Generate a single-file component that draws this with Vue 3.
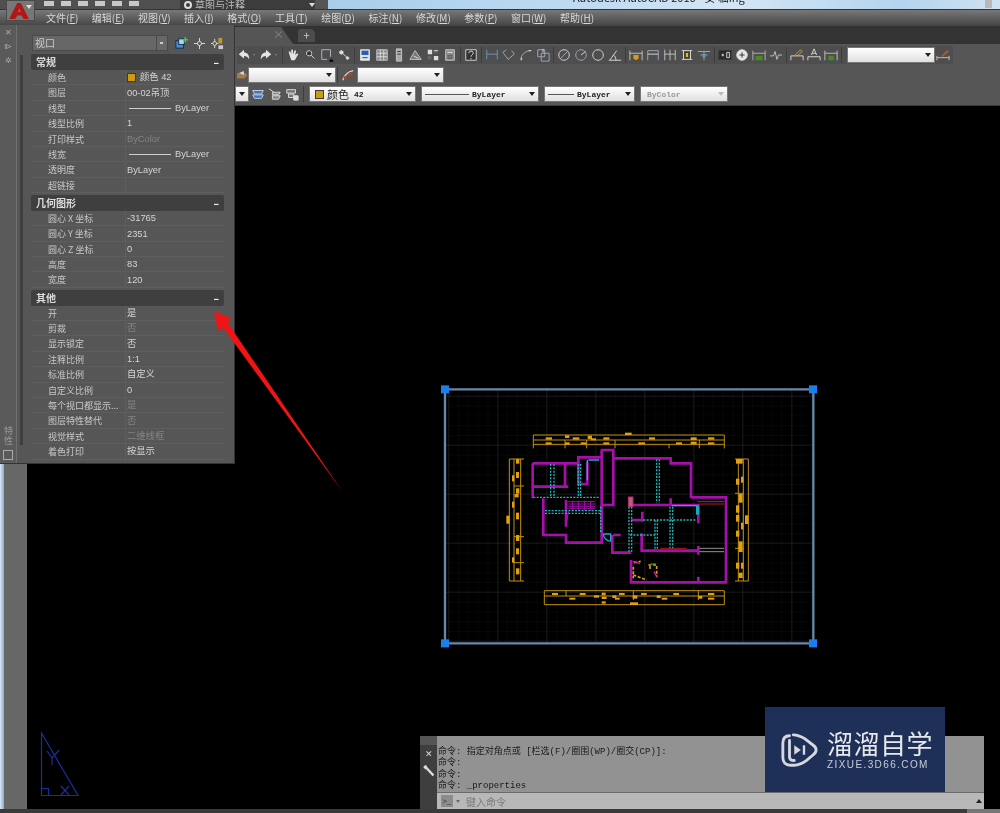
<template>
  <div class="cad">
    <header class="titlebar">
      <div class="qat">
        <span class="qat-btn" v-for="n in 6" :key="n"></span>
      </div>
      <div class="workspace">
        <svg class="gear" viewBox="0 0 10 10"><circle cx="5" cy="5" r="3" fill="none" stroke="#ddd" stroke-width="2" /></svg>
        <span>草图与注释</span>
        <i class="drop light"></i>
      </div>
      <span class="ws-more"></span>
      <div class="sky">
        <span class="app-title">Autodesk AutoCAD 2016 - 安 临ing</span>
        <span class="win-btn"></span>
      </div>
    </header>

    <div class="logo-btn">
      <svg viewBox="0 0 24 20" width="22" height="18">
        <path d="M1 19 L10 1 H14 L23 19 H17 L15 15 H10 L8 19 Z M11 11 H14 L12.500 7 Z" fill="#b01818" fill-rule="evenodd" />
      </svg>
      <i class="drop light"></i>
    </div>

    <nav class="menubar">
      <span v-for="m in menus" :key="m[0]" class="menu">{{ m[0] }}(<u>{{ m[1] }}</u>)</span>
    </nav>

    <div class="tabstrip">
      <div class="tab"><span class="tab-x">×</span></div>
      <div class="tab-add">+</div>
    </div>

    <section class="toolbars">
      <div class="tbar">
        <div class="tgroup wide">
          <button v-for="ic in undoIcons" :key="ic.id" class="tool"><svg viewBox="0 0 16 16"><path v-for="(p, i) in ic.d" :key="i" :d="p[0]" :stroke="p[1]" :fill="p[2] || 'none'" /></svg><i class="drop mini"></i></button>
        </div>
        <template v-for="(group, g) in toolGroups" :key="g">
          <span class="sep"></span>
          <div class="tgroup">
            <button v-for="ic in group" :key="ic.id" class="tool"><svg viewBox="0 0 16 16"><path v-for="(p, i) in ic.d" :key="i" :d="p[0]" :stroke="p[1]" :fill="p[2] || 'none'" /></svg></button>
          </div>
        </template>
        <span class="sep"></span>
        <div class="combo dim-style"><i class="drop"></i></div>
        <button class="tool"><svg viewBox="0 0 16 16"><path d="M1 14V9M15 14V9M1 11H15" stroke="#d8c8a8" fill="none" /><path d="M6 9L13 2L15 4L8 10Z" fill="#a05a30" /></svg></button>
      </div>

      <div class="tbar second">
        <button class="tool small"><svg viewBox="0 0 16 16"><path d="M0 5H12L15 8L11 13H0Z" fill="#a07a50" /><path d="M3 5L10 2V8Z" fill="#e0d8c8" /></svg></button>
        <div class="combo layer-a"><i class="drop"></i></div>
        <span class="sep"></span>
        <button class="tool"><svg viewBox="0 0 16 16"><path d="M2 14C4 8 8 4 14 3" stroke="#d8d8d8" fill="none" stroke-width="1.500" /><circle cx="11" cy="7" r="2.500" fill="#a04828" /><circle cx="5" cy="11" r="2" fill="#a04828" /></svg></button>
        <div class="combo layer-b"><i class="drop"></i></div>
      </div>

      <div class="tbar third">
        <div class="combo stub"><i class="drop"></i></div>
        <div class="tgroup">
          <button v-for="ic in layerIcons" :key="ic.id" class="tool"><svg viewBox="0 0 16 16"><path v-for="(p, i) in ic.d" :key="i" :d="p[0]" :stroke="p[1]" :fill="p[2] || 'none'" /></svg></button>
        </div>
        <span class="sep wide-sep"></span>
        <div class="combo color-c"><b class="swatch"></b><span class="cjk">颜色</span><span class="mono">42</span><i class="drop"></i></div>
        <div class="combo line-c"><span class="rule"></span><span class="mono">ByLayer</span><i class="drop"></i></div>
        <div class="combo weight-c"><span class="rule short"></span><span class="mono">ByLayer</span><i class="drop"></i></div>
        <div class="combo off-c"><span class="mono">ByColor</span><i class="drop faint"></i></div>
      </div>
    </section>

    <main class="workarea">
      <div class="edge"></div>
      <div class="left-gutter"></div>
      <div class="canvas"></div>
    </main>

    <footer class="statusbar"><span class="status-end"></span></footer>

    <!-- overlays -->
    <svg class="plan" viewBox="0 0 1200 810" width="400" height="270">
      <defs>
        <pattern id="minor" width="29.4" height="29.4" patternUnits="userSpaceOnUse" x="-1" y="21">
          <path d="M29.400 0V29.400M0 29.400H29.400" stroke="#101010" stroke-width="2" fill="none" />
        </pattern>
        <pattern id="major" width="147" height="147" patternUnits="userSpaceOnUse" x="58" y="50">
          <path d="M147 0V147M0 147H147" stroke="#2a2a2a" stroke-width="3" fill="none" />
        </pattern>
      </defs>
      <rect x="45" y="28" width="1105" height="762" fill="url(#minor)" />
      <rect x="45" y="28" width="1105" height="762" fill="url(#major)" />

      <g stroke="#c0900c" stroke-width="3" fill="none">
        <path v-for="(d, i) in dimLines" :key="i" :d="d" />
      </g>
      <g fill="#e0a010">
        <rect v-for="(r, i) in dimLabels" :key="i" :x="r[0]" :y="r[1]" :width="r[2]" :height="r[3]" />
      </g>

      <g stroke="#a010a8" stroke-width="3" fill="none">
        <path d="M415 365H495M415 372H495M415 379H495M415 386H495M428 362V392M446 362V392M464 362V392M482 362V392" />
      </g>
      <g stroke="#a610aa" stroke-width="8" fill="none">
        <path v-for="(d, i) in walls" :key="i" :d="d" />
      </g>
      <g stroke="#a610aa" stroke-width="3" fill="none">
        <path v-for="(d, i) in thinWalls" :key="i" :d="d" />
      </g>
      <rect x="595" y="351" width="14" height="29" fill="#a86a6a" stroke="#c02080" stroke-width="3" />
      <g stroke="#22b4b4" stroke-width="4" stroke-dasharray="6 4" fill="none">
        <path v-for="(d, i) in hidden" :key="i" :d="d" />
      </g>
      <g stroke="#22a8d0" stroke-width="4" fill="none">
        <path d="M475 240H508M472 240V300M725 377H800M520 462H542V484M520 462A23 23 0 0 0 542 484" />
      </g>
      <rect x="798" y="376" width="9" height="28" fill="#10b0b8" />
      <path d="M690 505H770M808 372H882" stroke="#b01818" stroke-width="3" fill="none" />
      <path d="M808 505H882M808 515H882" stroke="#909090" stroke-width="3" fill="none" />
      <path d="M612 548L632 544M610 560V595M610 585L650 600M655 555H680V590M660 558V572" stroke="#d8a010" stroke-width="5" stroke-dasharray="9 5" fill="none" />
      <path d="M608 545L630 550M672 575L682 592" stroke="#e02090" stroke-width="4" fill="none" />
      <path d="M662 552H678" stroke="#20c050" stroke-width="3" fill="none" />

      <path d="M45 28H1150V790H45Z" fill="none" stroke="#6688aa" stroke-width="7" />
      <g fill="#1880ec">
        <rect x="33" y="16" width="24" height="24" />
        <rect x="1137" y="16" width="24" height="24" />
        <rect x="33" y="778" width="24" height="24" />
        <rect x="1137" y="778" width="24" height="24" />
      </g>
    </svg>

    <svg class="ucs" viewBox="0 0 40 66" width="40" height="66">
      <path d="M1.500 2V64.500H38L1.500 2ZM1.500 57.500H8.500V64.500M7 20L12 27V34M12 27L19 19M21 55L29 64M21 64L29 55" fill="none" stroke="#1a2e9a" stroke-width="1.200" />
    </svg>

    <aside class="palette">
      <div class="pal-title">
        <span class="pal-btn">✕</span>
        <span class="pal-btn arrows">⧐</span>
        <span class="pal-btn gear-small">✲</span>
        <span class="pal-name">特性</span>
        <span class="pal-foot"></span>
      </div>
      <div class="pal-main">
        <div class="pal-head">
          <div class="pal-select"><span>视口</span><em><i></i></em></div>
          <svg class="pal-ic" viewBox="0 0 14 14"><rect x="1" y="4" width="8" height="8" fill="#4a90c8" stroke="#102a50" /><rect x="4" y="2" width="6" height="6" fill="#bcd4ea" stroke="#102a50" /><path d="M11 0V6M8 3H14" stroke="#38d040" stroke-width="1.600" /></svg>
          <svg class="pal-ic" viewBox="0 0 14 14"><circle cx="7" cy="7" r="2.200" fill="none" stroke="#ddd" /><path d="M7 1V5M7 9V13M1 7H5M9 7H13" stroke="#ddd" /></svg>
          <svg class="pal-ic" viewBox="0 0 14 14"><circle cx="4" cy="7" r="2" fill="none" stroke="#ddd" /><path d="M4 2V5M4 9V12M0 7H2M6 7H8" stroke="#ddd" /><rect x="8" y="1" width="4" height="6" fill="#c8962a" /><rect x="8" y="9" width="5" height="4" fill="#ccc" /></svg>
        </div>
        <div class="pal-scroll">
          <section v-for="sec in sections" :key="sec.name" class="pal-sec">
            <h3 class="sec-head"><span>{{ sec.name }}</span><b>–</b></h3>
            <div v-for="row in sec.rows" :key="row.k" class="prop">
              <span class="prop-k">{{ row.k }}</span>
              <span class="prop-v" :class="{ off: row.off }">
                <b v-if="row.swatch" class="swatch"></b>
                <span v-if="row.line" class="prop-line"></span>
                {{ row.v }}
              </span>
            </div>
          </section>
        </div>
      </div>
    </aside>

    <svg class="arrow" viewBox="0 0 140 190" width="140" height="190">
      <path d="M1 2L18 9L14.500 13.500L129 182L10 18.500L5 22Z" fill="#f01414" />
    </svg>

    <div class="cmd">
      <div class="cmd-side">
        <span class="grip"></span>
        <span class="cmd-x">✕</span>
        <svg viewBox="0 0 12 12" width="12" height="12"><path d="M3.500 3L10.500 10.500" stroke="#dcdcdc" stroke-width="2.400" fill="none" /><path d="M0.500 2.500L2.500 4.500L4.500 3L3.500 0.500C2 0 0.500 1 0.500 2.500Z" fill="#dcdcdc" /></svg>
      </div>
      <div class="cmd-body">
        <div class="cmd-log">
          <div>命令: 指定对角点或 [栏选(F)/圈围(WP)/圈交(CP)]:</div>
          <div>命令:</div>
          <div>命令:</div>
          <div>命令: _properties</div>
        </div>
        <div class="cmd-input">
          <span class="prompt">&gt;_</span><i class="drop tiny"></i>
          <span class="cmd-hint">键入命令</span>
          <i class="up"></i>
        </div>
      </div>
    </div>

    <div class="mark">
      <svg viewBox="0 0 40 40" width="38" height="38">
        <path d="M10 5C5 5 3 8 3 13V28C3 33 6 36 11 36H15C20 36 24 34 28 31L35 25C39 22 39 18 35 15L26 8C21 5 18 4 14 4" fill="none" stroke="#d4d8e0" stroke-width="3" stroke-linecap="round" />
        <path d="M10 10V27C10 30 12 31 15 31" fill="none" stroke="#d4d8e0" stroke-width="3" stroke-linecap="round" />
        <path d="M15 15L22 20L15 25Z" fill="#d4d8e0" />
        <rect x="24" y="15" width="2.500" height="10" fill="#d4d8e0" />
      </svg>
      <div class="mark-text">
        <div class="mark-cn">溜溜自学</div>
        <div class="mark-en">ZIXUE.3D66.COM</div>
      </div>
    </div>
  </div>
</template>

<script setup>
const menus = [
  ['文件', 'F'], ['编辑', 'E'], ['视图', 'V'], ['插入', 'I'], ['格式', 'O'], ['工具', 'T'],
  ['绘图', 'D'], ['标注', 'N'], ['修改', 'M'], ['参数', 'P'], ['窗口', 'W'], ['帮助', 'H']
]

const W = '#e4e4e4'
const D = '#a4b0bc'
const H = 'M1 14V3M15 14V3M1 6H15'
const mk = (id, ...d) => ({ id, d })

const undoIcons = [
  mk('undo', ['M2 7L8 2V5C12 5 14 8 14 13C12 10 11 9 8 9V12Z', 'none', W]),
  mk('redo', ['M14 7L8 2V5C4 5 2 8 2 13C4 10 5 9 8 9V12Z', 'none', W])
]

const toolGroups = [
  [
    mk('hand', ['M4 8L3 4L5 4L6 7L6 2L8 2L8 7L10 2.500L11.500 3L10.500 8L13 6L14 7L10 14H6Z', 'none', W]),
    mk('zoom', ['M7 3A3 3 0 1 0 7.010 3', W, '#333'], ['M9 8L13 12', W]),
    mk('zoomw', ['M2 2H12V10M2 2V13H8', '#b8c0c8'], ['M13 13A1.800 1.800 0 1 0 13.010 13', '#111', '#111']),
    mk('zoomp', ['M5 3A2 2 0 1 0 5.010 3', W, '#ddd'], ['M6 6L12 11', W], ['M12 10A1.500 1.500 0 1 0 12.010 10', '#ddd', '#ddd'])
  ],
  [
    mk('props', ['M3 2H13V14H3Z', '#eee', '#d8e4f0'], ['M4 3H12V8H4Z', 'none', '#2b5fa8'], ['M5 11H11', '#333']),
    mk('design', ['M2 2H14V14H2Z', '#ccc', '#888'], ['M6 2V14M10 2V14M2 6H14M2 10H14', '#e0e0e0']),
    mk('tools', ['M5 1H11V15H5Z', '#ccc', '#aaa'], ['M6 4H10M6 7H10', '#333']),
    mk('sheet', ['M1 13L7 3L14 13Z', '#ccc', '#777'], ['M5 9L11 12', W]),
    mk('markup', ['M2 2H7V7H2ZM9 9H14V14H9Z', 'none', '#ddd'], ['M9 2H13V6H9ZM2 9H6V13H2Z', 'none', '#666'], ['M9 3H14', '#ddd']),
    mk('calc', ['M3 2H13V14H3Z', '#ccc', '#8a8a8a'], ['M5 5H11', '#eee'], ['M5 9H11M5 11.500H11', '#444'])
  ],
  [mk('help', ['M2 2H14V14H2Z', '#ddd', '#333'], ['M5.500 6C5.500 2.500 11 3 10.500 6C10 8 8 8 8 10M8 11.500V13', '#eee'])],
  [
    mk('dl', ['M2 2V13M14 2V13M2 7H14', '#6f9ac4']),
    mk('da', ['M1 5L7 13L14 7', D], ['M1 5L5 2M14 7L11 3', D]),
    mk('dr', ['M2 14C2 8 7 3 14 3', D, 'none'], ['M3 14V11M11 3H14', W]),
    mk('do', ['M2 2H10V10H2Z', D], ['M6 6H15V15H6Z', D], ['M8 1V5', W])
  ],
  [
    mk('c1', ['M8 2A6 6 0 1 0 8.010 2', W], ['M4 12L12 4', D]),
    mk('c2', ['M8 2A6 6 0 1 0 8.010 2', D], ['M8 8L13 4', W]),
    mk('c3', ['M8 2A6 6 0 1 0 8.010 2', W]),
    mk('c4', ['M1 14H15', W], ['M2 14L10 3M9 14C9 11 8 9 6 8', W])
  ],
  [
    mk('h1', [H, '#d8c8b0'], ['M5 8H11V12L8 14L5 12Z', 'none', '#d89a20']),
    mk('h2', ['M2 14V3H14V14', D], ['M2 7H14', W]),
    mk('h3', ['M2 14V2M8 14V2M14 14V2M2 7H14', '#c8c8c8']),
    mk('h4', ['M2 3H14M2 13H14M4 3V13M12 3V13', W], ['M6 5H10V11H6Z', '#222', '#d8c020']),
    mk('h5', ['M1 4H15M8 4V14M4 8H12', D], ['M6 10H10', '#4ab0e0'])
  ],
  [
    mk('b1', ['M1 3H15V13H1Z', '#333', '#2a2a2a'], ['M4 8H7M5.500 6.500V9.500', W], ['M10 5H13V11H10Z', W]),
    mk('b2', ['M8 2A6 6 0 1 0 8.010 2', W, W], ['M8 5V11M5 8H11', '#222']),
    mk('b3', ['M1 14V3M15 14V3M1 6H15', '#b8b8b8'], ['M4 9H12V14H4Z', 'none', '#4a8a20']),
    mk('b4', ['M1 9L5 9L7 4L9 13L11 8L15 8', '#c8c8c8'])
  ],
  [
    mk('e1', ['M1 14V9H15V14', W], ['M6 8L12 2L14 4L8 9', '#d8a020']),
    mk('e2', ['M1 14V10H15V14', W], ['M5 8L8 1L11 8M6 6H10', W]),
    mk('e3', ['M1 14V3M15 14V3M1 6H15', '#c8c8c8'], ['M5 9H11V14H5Z', 'none', '#4a8a20'])
  ]
]

const layerIcons = [
  mk('l1', ['M2 4H14L12 8H4Z', '#d0d8e8', '#3a78c0'], ['M2 9H14L12 13H4Z', '#d0d8e8', '#3a78c0']),
  mk('l2', ['M1 2L7 6', W], ['M5 6H14L12 9H5ZM5 10H14L12 14H5Z', W, '#888']),
  mk('l3', ['M2 3H12V7H2Z', W, '#777'], ['M4 8H10V12H4Z', W, '#777'], ['M10 10H15V15H10Z', W, '#ddd'])
]

const sections = [
  {
    name: '常规',
    rows: [
      { k: '颜色', v: '颜色 42', swatch: true },
      { k: '图层', v: '00-02吊顶' },
      { k: '线型', v: 'ByLayer', line: true },
      { k: '线型比例', v: '1' },
      { k: '打印样式', v: 'ByColor', off: true },
      { k: '线宽', v: 'ByLayer', line: true },
      { k: '透明度', v: 'ByLayer' },
      { k: '超链接', v: '' }
    ]
  },
  {
    name: '几何图形',
    rows: [
      { k: '圆心 X 坐标', v: '-31765' },
      { k: '圆心 Y 坐标', v: '2351' },
      { k: '圆心 Z 坐标', v: '0' },
      { k: '高度', v: '83' },
      { k: '宽度', v: '120' }
    ]
  },
  {
    name: '其他',
    rows: [
      { k: '开', v: '是' },
      { k: '剪裁', v: '否', off: true },
      { k: '显示锁定', v: '否' },
      { k: '注释比例', v: '1:1' },
      { k: '标准比例', v: '自定义' },
      { k: '自定义比例', v: '0' },
      { k: '每个视口都显示...', v: '是', off: true },
      { k: '图层特性替代', v: '否', off: true },
      { k: '视觉样式', v: '二维线框', off: true },
      { k: '着色打印', v: '按显示' }
    ]
  }
]

// floor plan, in units of the 1200x810 drawing box
const walls = [
  'M308 250H445V232H512M512 210H550V375H515V210M550 235H722V250H783V355',
  'M308 250V355M340 355V465H408V488H515V375M445 250V312H472V245',
  'M405 250V318M312 320H415M408 360V440',
  'M547 465V518H603M550 465H572M605 375H805V430',
  'M722 355V375M603 420H640M637 395V425M635 460V512H805',
  'M805 498V524M805 590V607M603 540V607H888V352H785'
]
const thinWalls = ['M802 365H882M415 395L408 440M638 515H800M612 608H884']
const hidden = [
  'M362 252V350M372 252V350M445 252V350M452 252V350',
  'M680 238V370M688 238V370M310 352H510M345 392H510M345 400H510',
  'M512 380V460M597 380V515M605 380V515M600 465H675',
  'M640 420H800M720 380V510M728 380V510M675 420V510M682 420V510'
]
const dimLines = [
  'M310 165H883M310 180H883M310 193H883M310 165V205M883 165V205M405 180V205M470 180V205M555 180V205M717 193V205M808 180V205',
  'M343 632H883M343 648H883M343 674H883M343 632V674M883 632V674M408 632V648M610 632V660M805 632V660',
  'M238 237V603M252 237V603M272 237V603M238 237H282M238 603H282M252 318H282M252 470H282M252 548H282',
  'M925 237V603M940 237V603M955 237V603M915 237H955M915 603H955M915 340H940M915 505H940'
]
const dimLabels = [
  [585, 158, 20, 7], [347, 172, 19, 7], [347, 187, 18, 6], [405, 166, 13, 8], [405, 187, 14, 7], [428, 172, 20, 7],
  [473, 167, 13, 10], [483, 175, 15, 6], [452, 187, 17, 6], [520, 172, 18, 7], [520, 187, 18, 6], [625, 187, 20, 6],
  [657, 172, 18, 7], [738, 187, 18, 6], [782, 172, 18, 8], [782, 185, 18, 8], [834, 172, 19, 7], [834, 187, 19, 6],
  [366, 639, 18, 6], [418, 653, 18, 6], [449, 639, 18, 6], [492, 646, 15, 7], [515, 638, 12, 8], [515, 650, 15, 7],
  [547, 646, 12, 8], [555, 653, 14, 6], [567, 639, 17, 6], [608, 646, 14, 10], [633, 639, 17, 6], [680, 646, 12, 8],
  [695, 653, 17, 6], [730, 639, 17, 6], [805, 648, 12, 8], [834, 639, 19, 6], [834, 653, 19, 6], [600, 667, 24, 8], [515, 664, 12, 7],
  [229, 407, 10, 24], [258, 237, 10, 14], [246, 286, 7, 18], [258, 276, 9, 18], [258, 325, 10, 16], [254, 342, 12, 10],
  [246, 365, 7, 18], [258, 398, 9, 20], [258, 465, 10, 18], [246, 532, 7, 16], [258, 505, 9, 18], [258, 565, 10, 18],
  [918, 237, 20, 14], [918, 296, 10, 18], [933, 290, 7, 18], [926, 342, 12, 26], [918, 376, 10, 22], [918, 405, 10, 20],
  [933, 428, 7, 20], [945, 406, 10, 26], [918, 452, 10, 18], [926, 484, 12, 32], [918, 548, 10, 18], [933, 548, 7, 18], [926, 578, 12, 16]
]
</script>

<style>
html, body {
  margin: 0;
  background: #000;
}
</style>

<style scoped>
.cad {
  position: relative;
  width: 1000px;
  height: 813px;
  overflow: hidden;
  display: flex;
  flex-direction: column;
  background: #000;
  font-family: "Noto Sans CJK SC", "Liberation Sans", sans-serif;
  color: #ddd;
  filter: blur(0.4px);
}

/* title bar */
.titlebar {
  display: flex;
  height: 9px;
  background: #4a4a4a;
  border-bottom: 1px solid #333;
  flex: none;
}
.qat {
  width: 180px;
  display: flex;
  gap: 7px;
  padding: 1px 0 0 44px;
  box-sizing: border-box;
  background: #505050;
}
.qat-btn {
  width: 10px;
  height: 5px;
  background: #c8c8c8;
}
.workspace {
  width: 132px;
  background: #3c3c3c;
  display: flex;
  align-items: center;
  gap: 2px;
  padding-left: 3px;
  font-size: 10px;
  line-height: 8px;
  color: #bbb;
  overflow: hidden;
}
.gear {
  width: 10px;
  height: 10px;
  flex: none;
}
.workspace span {
  flex: 1;
}
.ws-more {
  width: 13px;
  background: #555;
}
.sky {
  flex: 1;
  position: relative;
  overflow: hidden;
  background: linear-gradient(90deg, #a9cdea 0%, #c0dcf2 40%, #d4e6f4 60%, #b4d4ee 85%, #cfe2f1 100%);
}
.app-title {
  display: block;
  margin: -10px 0 0 245px;
  font-size: 11px;
  line-height: 14px;
  color: #222;
  white-space: nowrap;
}
.win-btn {
  position: absolute;
  right: 8px;
  top: 0;
  width: 7px;
  height: 8px;
  background: #b8b8b8;
}

.logo-btn {
  position: absolute;
  left: 6px;
  top: 0;
  width: 29px;
  height: 21px;
  background: #777;
  border: 1px solid #4a4a4a;
  box-sizing: border-box;
  z-index: 3;
  padding-left: 1px;
}
.logo-btn .drop {
  position: absolute;
  right: 2px;
  top: 4px;
}

/* menu */
.menubar {
  height: 16px;
  flex: none;
  display: flex;
  gap: 13.500px;
  padding-left: 46px;
  background: linear-gradient(#787878, #444);
  font-size: 10px;
  line-height: 15px;
  color: #d8d8d8;
}
.menu {
  white-space: nowrap;
}

.tabstrip {
  height: 18px;
  flex: none;
  display: flex;
  gap: 5px;
  background: #333;
  padding-top: 1px;
  box-sizing: border-box;
}
.tab {
  width: 293px;
  background: #555;
  clip-path: polygon(0 0, 96% 0, 100% 100%, 0 100%);
  text-align: right;
  padding-right: 9px;
  box-sizing: border-box;
  font-size: 11px;
  line-height: 15px;
  color: #888;
}
.tab-add {
  width: 17px;
  background: #4c4c4c;
  border-radius: 3px 5px 0 0;
  text-align: center;
  font-size: 11px;
  line-height: 13px;
  height: 13px;
  margin-top: 2px;
  color: #ccc;
}

/* toolbars */
.toolbars {
  height: 62px;
  flex: none;
  box-sizing: border-box;
  padding-top: 2px;
  background: #565656;
  border-bottom: 1px solid #3a3a3a;
}
.tbar {
  height: 18px;
  display: flex;
  align-items: center;
  margin: 0 0 2px 236.500px;
  width: 716px;
  background: #4e4e4e;
}
.tbar.second {
  width: 216px;
  background: transparent;
}
.tbar.third {
  width: auto;
  background: transparent;
  margin-left: 235px;
  margin-top: -1px;
}
.tgroup {
  display: flex;
}
.tgroup.wide .tool {
  width: 22px;
  justify-content: flex-start;
  gap: 2px;
}
.tool {
  width: 17px;
  height: 18px;
  border: 0;
  padding: 0;
  background: none;
  display: flex;
  align-items: center;
  justify-content: center;
  flex: none;
}
.tool svg {
  width: 14px;
  height: 14px;
  display: block;
}
.tool.small {
  width: 11px;
}
.sep {
  width: 1px;
  height: 16px;
  margin: 0 1.500px;
  background: #3c3c3c;
  flex: none;
}
.wide-sep {
  margin: 0 5px 0 3px;
}
.combo {
  height: 16px;
  box-sizing: border-box;
  background: linear-gradient(#fff, #e0e0e0);
  display: flex;
  align-items: center;
  position: relative;
  color: #222;
  flex: none;
  border: 1px solid #777;
}
.combo .drop {
  position: absolute;
  right: 3px;
  top: 5px;
}
.drop {
  display: inline-block;
  width: 0;
  height: 0;
  border: 3px solid transparent;
  border-top: 4px solid #222;
  border-bottom: 0;
}
.drop.light {
  border-top-color: #ddd;
}
.drop.faint {
  border-top-color: #bbb;
}
.drop.mini {
  border-width: 1.500px;
  border-top: 2px solid #8a8a8a;
  border-bottom: 0;
}
.dim-style {
  width: 88px;
  margin-left: 3px;
}
.layer-a {
  width: 88px;
}
.layer-b {
  width: 87px;
}
.stub {
  width: 14px;
}
.color-c {
  width: 107px;
  padding-left: 5px;
  margin-right: 5px;
}
.line-c {
  width: 118px;
  margin-right: 5px;
  padding-left: 3px;
}
.weight-c {
  width: 91px;
  margin-right: 5px;
  padding-left: 3px;
}
.off-c {
  width: 88px;
  padding-left: 6px;
  color: #999;
}
.swatch {
  display: inline-block;
  width: 7px;
  height: 7px;
  background: #d09a10;
  border: 1px solid #3a3a3a;
  margin-right: 3px;
  flex: none;
}
.cjk {
  font-size: 11px;
  line-height: 14px;
  margin-right: 5px;
}
.mono {
  font-family: "Liberation Mono", monospace;
  font-size: 8px;
  font-weight: bold;
}
.rule {
  width: 44px;
  height: 1px;
  background: #555;
  margin-right: 3px;
}
.rule.short {
  width: 26px;
}

/* drawing area */
.workarea {
  flex: 1;
  display: flex;
  min-height: 0;
}
.edge {
  width: 4px;
  background: linear-gradient(90deg, #dce9f5, #88a9d6);
}
.left-gutter {
  width: 23px;
  background: #676767;
}
.canvas {
  flex: 1;
  background: #000;
}
.statusbar {
  height: 4px;
  flex: none;
  background: #3a3a3a;
  position: relative;
}
.status-end {
  position: absolute;
  right: 0;
  top: 0;
  width: 33px;
  height: 4px;
  background: #777;
}

.plan {
  position: absolute;
  left: 430px;
  top: 380px;
}
.ucs {
  position: absolute;
  left: 40px;
  top: 731px;
}

/* properties palette */
.palette {
  position: absolute;
  left: 0;
  top: 25px;
  width: 235px;
  height: 439px;
  display: flex;
  background: #565656;
  border-right: 1px solid #333;
  border-bottom: 1px solid #333;
  box-sizing: border-box;
  z-index: 2;
}
.pal-title {
  width: 16px;
  display: flex;
  flex-direction: column;
  align-items: center;
  background: #5a5a5a;
  font-size: 9px;
  color: #a8a8a8;
  flex: none;
}
.pal-btn {
  height: 14px;
  line-height: 14px;
  font-size: 8px;
}
.pal-name {
  margin-top: auto;
  writing-mode: vertical-rl;
  font-size: 9px;
  line-height: 10px;
  color: #999;
  letter-spacing: 1px;
}
.pal-foot {
  width: 8px;
  height: 8px;
  border: 1px solid #aaa;
  margin: 4px 0 3px;
}
.pal-main {
  flex: 1;
  border-left: 1px solid #707070;
  padding: 10px 10px 0 14px;
  position: relative;
  min-width: 0;
}
.pal-main::before {
  content: "";
  position: absolute;
  left: 3px;
  top: 30px;
  bottom: 18px;
  width: 3px;
  background: #3e3e3e;
}
.pal-head {
  display: flex;
  align-items: center;
  height: 16px;
  gap: 5px;
  margin-bottom: 3px;
}
.pal-select {
  width: 138px;
  height: 16px;
  box-sizing: border-box;
  background: #676767;
  border: 1px solid #4a4a4a;
  display: flex;
  font-size: 10px;
  line-height: 14px;
  color: #ccc;
  padding-left: 2px;
  margin-right: 2px;
  margin-left: 1px;
}
.pal-select span {
  flex: 1;
}
.pal-select em {
  width: 10px;
  border-left: 1px solid #4a4a4a;
  position: relative;
}
.pal-select i {
  position: absolute;
  left: 3px;
  top: 6px;
  width: 3px;
  height: 2px;
  background: #ccc;
}
.pal-ic {
  width: 13px;
  height: 13px;
  flex: none;
}
.sec-head {
  margin: 0;
  height: 16px;
  background: #3f3f3f;
  border-radius: 2px;
  display: flex;
  justify-content: space-between;
  padding: 0 5px;
  font-size: 10px;
  line-height: 15px;
  font-weight: bold;
  color: #dcdcdc;
}
.sec-head b {
  color: #eee;
}
.pal-sec {
  margin-bottom: 1.800px;
}
.prop {
  height: 15.400px;
  display: flex;
  font-size: 9px;
  line-height: 15px;
  border-bottom: 1px solid #5e5e5e;
  box-sizing: border-box;
}
.prop-k {
  width: 95px;
  padding-left: 17px;
  box-sizing: border-box;
  border-right: 1px solid #5e5e5e;
  white-space: nowrap;
  color: #c8c8c8;
  flex: none;
}
.prop-v {
  padding: 1px 0 0 1px;
  box-sizing: border-box;
  display: flex;
  align-items: center;
  color: #d4d4d4;
  white-space: nowrap;
  font-size: 9.300px;
  font-family: "Liberation Sans", "Noto Sans CJK SC", sans-serif;
}
.prop-v.off {
  color: #848484;
}
.prop-line {
  width: 42px;
  height: 1px;
  background: #cfcfcf;
  margin: 0 4px 0 2px;
}
.prop-v .swatch {
  margin-right: 4px;
}

.arrow {
  position: absolute;
  left: 213px;
  top: 309px;
  z-index: 4;
}

/* command line */
.cmd {
  position: absolute;
  left: 420px;
  top: 736px;
  width: 564px;
  height: 73px;
  display: flex;
}
.cmd-side {
  width: 17px;
  background: #3e3e3e;
  display: flex;
  flex-direction: column;
  align-items: center;
  color: #d8d8d8;
  font-size: 9px;
}
.grip {
  width: 100%;
  height: 9px;
  background: #555;
}
.cmd-x {
  margin: 2px 0 4px;
  line-height: 14px;
}
.cmd-body {
  flex: 1;
  display: flex;
  flex-direction: column;
  background: #929292;
}
.cmd-log {
  flex: 1;
  padding: 11px 0 0 1px;
  font-family: "Liberation Mono", "Noto Sans CJK SC", monospace;
  font-size: 9px;
  line-height: 11.300px;
  color: #1a1a1a;
  white-space: nowrap;
}
.cmd-input {
  height: 17px;
  background: #b8b8b8;
  border-top: 1px solid #6a6a6a;
  box-sizing: border-box;
  display: flex;
  align-items: center;
  position: relative;
  padding-left: 4px;
  font-size: 10px;
  color: #777;
}
.prompt {
  width: 12px;
  height: 12px;
  background: #8c8c8c;
  font-size: 8px;
  line-height: 12px;
  text-align: center;
  color: #333;
}
.drop.tiny {
  margin: 0 6px 0 3px;
  border-width: 2px;
  border-top: 3px solid #666;
  border-bottom: 0;
}
.cmd-hint {
  color: #7a7a7a;
}
.up {
  position: absolute;
  right: 2px;
  top: 6px;
  border: 3px solid transparent;
  border-bottom: 4px solid #222;
  border-top: 0;
}

/* watermark */
.mark {
  position: absolute;
  left: 765px;
  top: 707px;
  width: 180px;
  height: 85px;
  background: #1f3058;
  display: flex;
  align-items: center;
  gap: 9px;
  padding: 0 0 0 15px;
  box-sizing: border-box;
  z-index: 5;
}
.mark-cn {
  font-size: 26px;
  line-height: 30px;
  letter-spacing: 0.500px;
  color: #e6e8ec;
  white-space: nowrap;
}
.mark-en {
  font-family: "Liberation Sans", sans-serif;
  font-size: 10px;
  line-height: 13px;
  letter-spacing: 1.400px;
  color: #c8ccd6;
  white-space: nowrap;
}
</style>
